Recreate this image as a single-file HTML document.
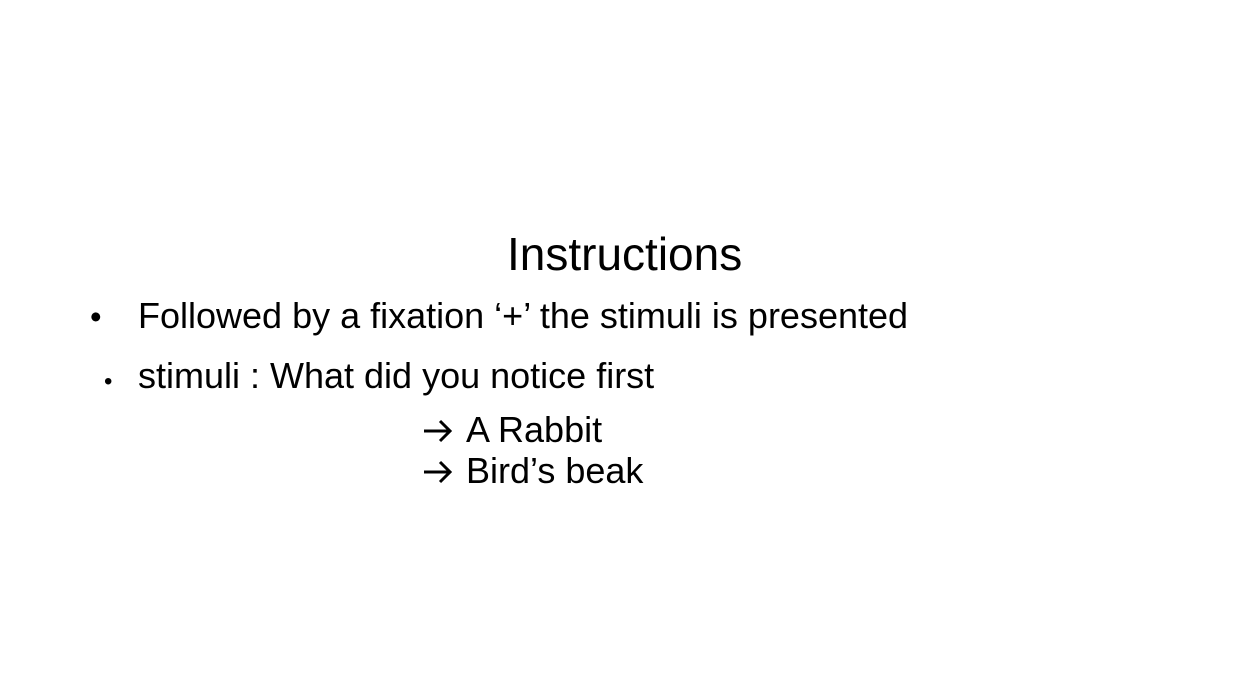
<!DOCTYPE html>
<html><head><style>
body{margin:0;width:1237px;height:695px;background:#fff;position:relative;font-family:"Liberation Sans",sans-serif;color:#000;overflow:hidden}
div{position:absolute;white-space:nowrap}
</style></head><body>
<div style="left:507px;top:228px;font-size:46px;line-height:52px">Instructions</div>
<div style="left:90px;top:297px;font-size:33px;line-height:40px">•</div>
<div style="left:138px;top:295px;font-size:36px;line-height:42px">Followed by a fixation ‘+’ the stimuli is presented</div>
<div style="left:104px;top:362px;font-size:24px;line-height:40px">•</div>
<div style="left:138px;top:355px;font-size:36px;line-height:42px">stimuli : What did you notice first</div>
<svg style="position:absolute;left:422px;top:418px" width="32" height="26" viewBox="0 0 32 26"><path d="M2 13 H28 M18 3 L28 13 L18 23" fill="none" stroke="#000" stroke-width="3"/></svg>
<div style="left:466px;top:409px;font-size:36px;line-height:42px">A Rabbit</div>
<svg style="position:absolute;left:422px;top:459px" width="32" height="26" viewBox="0 0 32 26"><path d="M2 13 H28 M18 3 L28 13 L18 23" fill="none" stroke="#000" stroke-width="3"/></svg>
<div style="left:466px;top:450px;font-size:36px;line-height:42px">Bird’s beak</div>
</body></html>
